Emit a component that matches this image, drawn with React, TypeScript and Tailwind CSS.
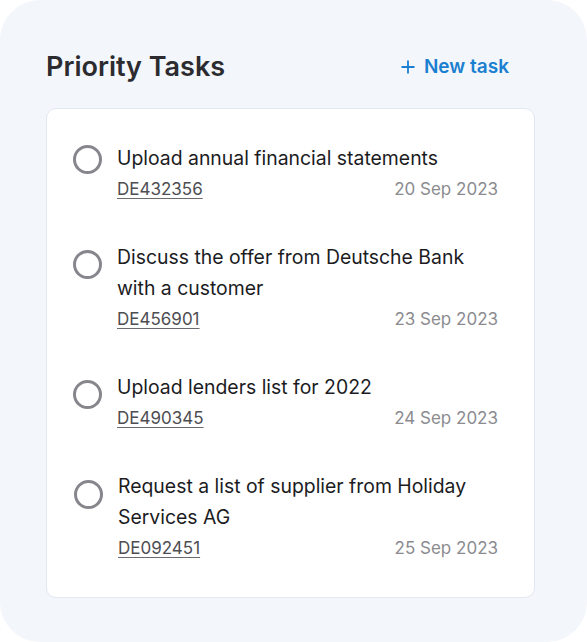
import { Plus } from "lucide-react";

const TASKS = [
  { id: "DE432356", title: "Upload annual financial statements", date: "20 Sep 2023", dot: "mt-[2px]" },
  { id: "DE456901", title: "Discuss the offer from Deutsche Bank with a customer", date: "23 Sep 2023", dot: "mt-[8px]" },
  { id: "DE490345", title: "Upload lenders list for 2022", date: "24 Sep 2023", dot: "mt-[8px]" },
  { id: "DE092451", title: "Request a list of supplier from Holiday Services AG", date: "25 Sep 2023", dot: "mt-[9px]", shift: true },
];

export default function App() {
  return (
    <div className="w-[587px] h-[642px] bg-white" style={{ fontFamily: "Inter, 'Open Sans', sans-serif" }}>
      <div className="h-full rounded-[40px] bg-[#f3f6fa] pl-[46px] pr-[52px] pt-[48px]">
        {/* header */}
        <div className="flex items-center justify-between pr-[26px]">
          <h2 className="text-[27px] font-semibold text-[#2b2b30] leading-[38px]">Priority Tasks</h2>
          <button className="flex items-center gap-[6px] text-[19px] font-semibold text-[#1b7fd1]">
            <Plus size={20} strokeWidth={2.2} />
            New task
          </button>
        </div>

        {/* task card */}
        <div className="mt-[22px] rounded-[10px] border border-[#e1e8f1] bg-white pl-[26px] pr-[36px] pt-[34px] pb-[33px] flex flex-col gap-[37px]">
          {TASKS.map(t => (
            <div key={t.id} className={`flex items-start gap-[15px] ${t.shift ? "ml-[1px]" : ""}`}>
              <div className={`${t.dot} w-[29px] h-[29px] shrink-0 rounded-full border-[3px] border-[#86868c]`} />
              <div className="flex-1 min-w-0">
                <div className="text-[19.4px] leading-[31px] text-[#1c1c1f]">{t.title}</div>
                <div className="flex items-center justify-between text-[17px] leading-[31px]">
                  <span className="text-[#4d4d52] underline decoration-[#6a6a70] underline-offset-[3px]">{t.id}</span>
                  <span className="text-[#8b8b90]">{t.date}</span>
                </div>
              </div>
            </div>
          ))}
        </div>
      </div>
    </div>
  );
}
